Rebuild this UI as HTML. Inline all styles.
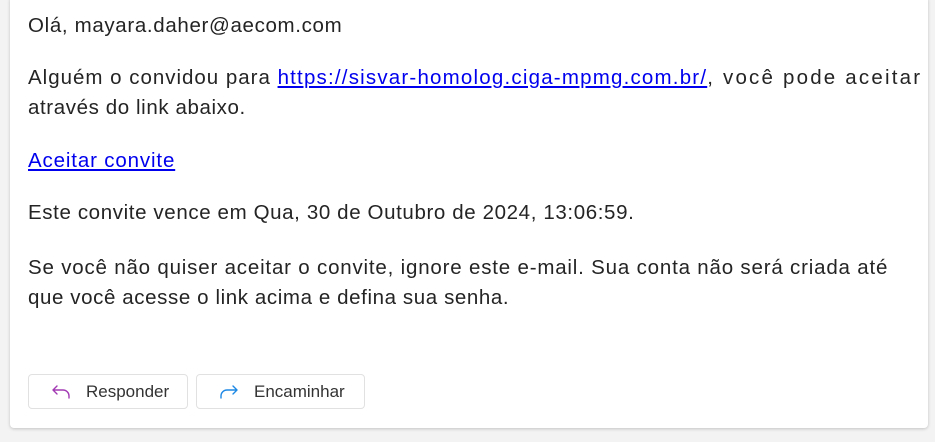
<!DOCTYPE html>
<html><head><meta charset="utf-8"><style>
body{margin:0;width:935px;height:442px;background:#f3f3f3;font-family:"Liberation Sans",sans-serif;overflow:hidden}
.card{position:absolute;left:10px;top:-4px;width:918px;height:432px;background:#fff;border-radius:4px;box-shadow:0 1px 3px rgba(0,0,0,.2)}
.t{position:absolute;left:18px;font-size:20.5px;color:#242424;white-space:nowrap;line-height:30px}
a{color:#0000ee;text-decoration:underline}
.btn{position:absolute;top:378px;height:33px;border:1px solid #e1e1e1;border-radius:4px;font-size:17px;color:#333;line-height:33px}
.btn svg{position:absolute;left:22px;top:9px}
.btn span{position:absolute;left:57px}
</style></head><body>
<div class="card">
<div class="t" style="top:15px;letter-spacing:.66px">Olá, mayara.daher@aecom.com</div>
<div class="t" style="top:67px"><span style="letter-spacing:.99px">Alguém o convidou para </span><a style="letter-spacing:1.2px">https://sisvar-homolog.ciga-mpmg.com.br/</a><span style="letter-spacing:2.2px">, você pode aceitar</span><br><span style="letter-spacing:.6px">através do link abaixo.</span></div>
<div class="t" style="top:150px;letter-spacing:.85px"><a>Aceitar convite</a></div>
<div class="t" style="top:202px;letter-spacing:.62px">Este convite vence em Qua, 30 de Outubro de 2024, 13:06:59.</div>
<div class="t" style="top:257px"><span style="letter-spacing:.81px">Se você não quiser aceitar o convite, ignore este e-mail. Sua conta não será criada até</span><br><span style="letter-spacing:.6px">que você acesse o link acima e defina sua senha.</span></div>
<div class="btn" style="left:18px;width:158px"><svg width="20" height="16" viewBox="0 0 20 16"><path d="M6 2 L2 6 L6 10 M2 6 H12 A6 6 0 0 1 18 12 V14" fill="none" stroke="#a23ab4" stroke-width="1.4" stroke-linecap="round" stroke-linejoin="round"/></svg><span>Responder</span></div>
<div class="btn" style="left:186px;width:167px"><svg width="20" height="16" viewBox="0 0 20 16"><path d="M14 2 L18 6 L14 10 M18 6 H8 A6 6 0 0 0 2 12 V14" fill="none" stroke="#1e88e5" stroke-width="1.4" stroke-linecap="round" stroke-linejoin="round"/></svg><span>Encaminhar</span></div>
</div>
</body></html>
